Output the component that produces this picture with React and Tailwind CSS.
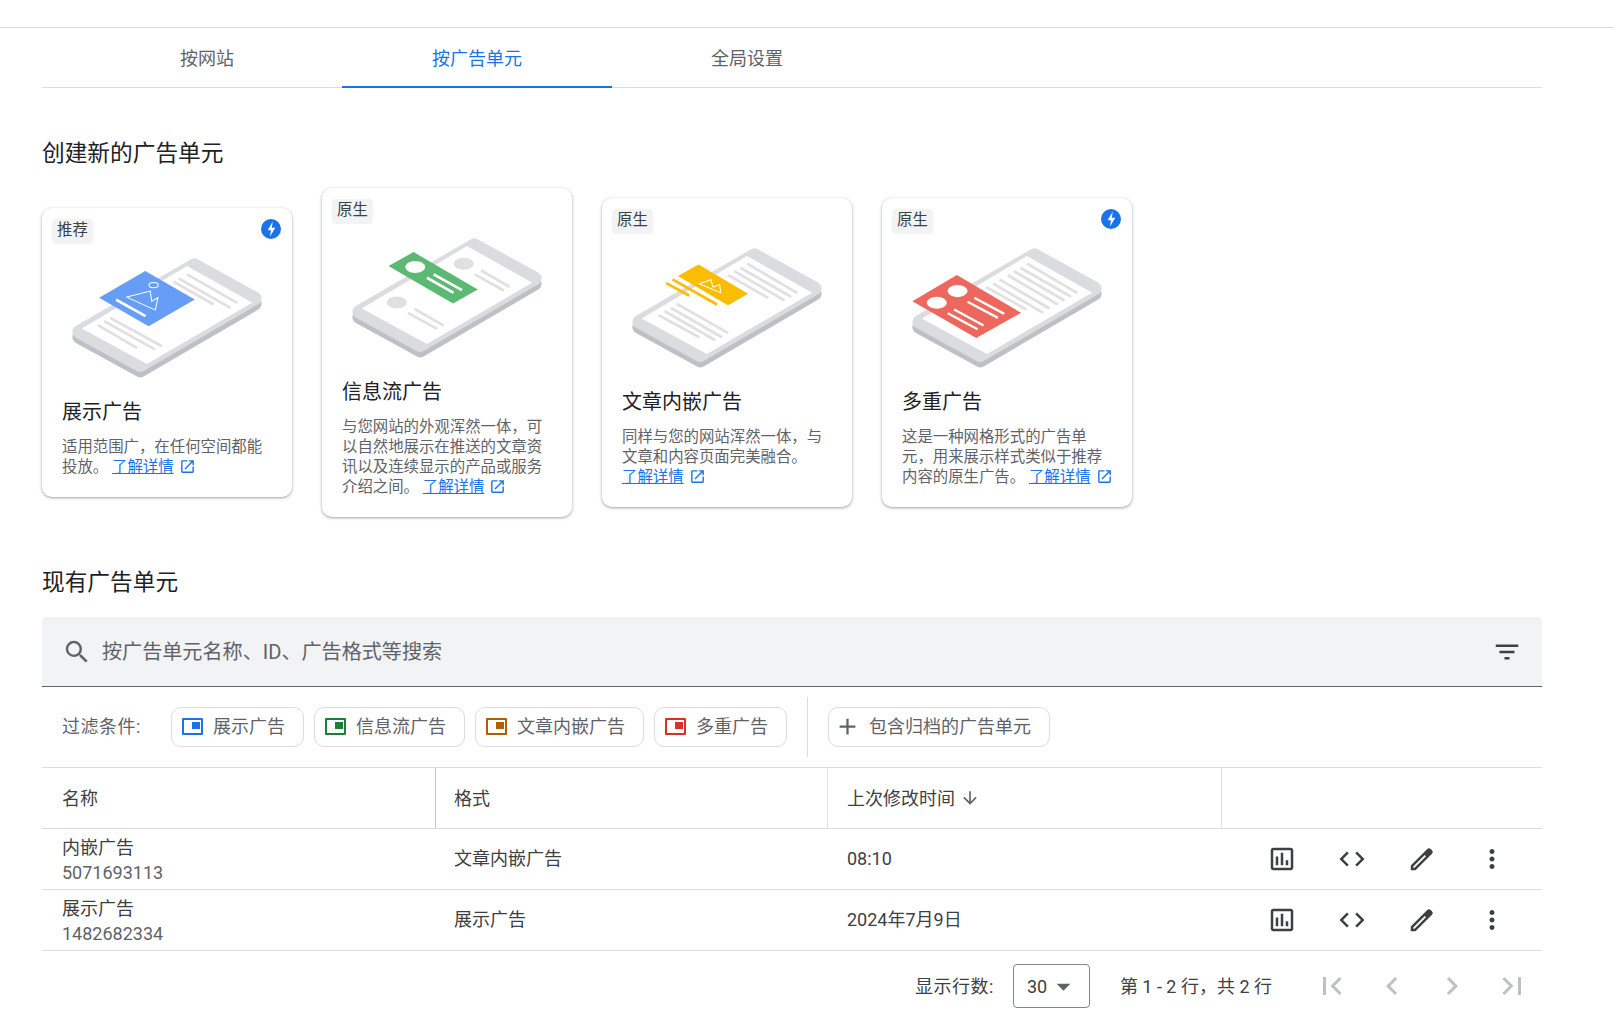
const P = {
  bolt: "M12 2a10 10 0 1 0 0 20 10 10 0 0 0 0-20zm-1 17.500 1-6.300H8.600L13.800 4.500l-1 6.300h3.500z",
  open: "M19 19H5V5h7V3H5a2 2 0 0 0-2 2v14a2 2 0 0 0 2 2h14c1.100 0 2-.9 2-2v-7h-2v7zM14 3v2h3.590l-9.830 9.830 1.410 1.410L19 6.410V10h2V3h-7z",
  search: "M15.500 14h-.79l-.28-.27A6.471 6.471 0 0 0 16 9.500 6.500 6.500 0 1 0 9.500 16c1.610 0 3.090-.59 4.230-1.570l.27.28v.79l5 4.990L20.490 19l-4.990-5zm-6 0C7.010 14 5 11.990 5 9.500S7.010 5 9.500 5 14 7.010 14 9.500 11.990 14 9.500 14z",
  filter: "M10 18h4v-2h-4v2zM3 6v2h18V6H3zm3 7h12v-2H6v2z",
  plus: "M19 13h-6v6h-2v-6H5v-2h6V5h2v6h6v2z",
  down: "M20 12l-1.410-1.410L13 16.170V4h-2v12.170l-5.580-5.590L4 12l8 8 8-8z",
  stats: "M19 3H5c-1.100 0-2 .9-2 2v14c0 1.100.9 2 2 2h14c1.100 0 2-.9 2-2V5c0-1.100-.9-2-2-2zm0 16H5V5h14v14zM7 10h2v7H7zm4-3h2v10h-2zm4 6h2v4h-2z",
  code: "M9.400 16.600L4.800 12l4.600-4.600L8 6l-6 6 6 6 1.400-1.400zm5.200 0l4.600-4.600-4.600-4.600L16 6l6 6-6 6-1.400-1.400z",
  edit: "M3 21v-3.800L16.200 4a2 2 0 0 1 2.800 0l1 1a2 2 0 0 1 0 2.800L6.800 21zM5 19h1l9.200-9.200-1-1L5 18z",
  more: "M12 8c1.100 0 2-.9 2-2s-.9-2-2-2-2 .9-2 2 .9 2 2 2zm0 2c-1.100 0-2 .9-2 2s.9 2 2 2 2-.9 2-2-.9-2-2-2zm0 6c-1.100 0-2 .9-2 2s.9 2 2 2 2-.9 2-2-.9-2-2-2z",
  first: "M18.410 16.590L13.820 12l4.590-4.590L17 6l-6 6 6 6zM6 6h2v12H6z",
  prev: "M15.410 7.410L14 6l-6 6 6 6 1.410-1.410L10.830 12z",
  next: "M10 6L8.590 7.410 13.170 12l-4.580 4.590L10 18l6-6z",
  last: "M5.590 7.410L10.180 12l-4.590 4.590L7 18l6-6-6-6zM16 6h2v12h-2z",
  caret: "M7 10l5 5 5-5z",
};

const C = "\uFF0C";

const Icon = ({ d, className }) => (
  <svg viewBox="0 0 24 24" className={className} fill="currentColor" aria-hidden="true">
    <path d={d} fillRule="evenodd" />
  </svg>
);

const Lines = ({ items, color = "#e0e0e0", w = 8 }) => (
  <g stroke={color} strokeWidth={w} fill="none">
    {items.map((l, i) => (
      <line key={i} x1={l[0]} y1={l[1]} x2={l[2]} y2={l[3]} />
    ))}
  </g>
);

const Phone = ({ children }) => (
  <svg viewBox="120 198 580 365" className="block w-[194px] h-[122px] ml-[28px] mt-[49px]" aria-hidden="true">
    <polygon points="147,438 492,238 673,338 330,538" fill="#bdc1c6" stroke="#bdc1c6" strokeWidth="40" strokeLinejoin="round" />
    <polygon points="147,422 492,222 673,322 330,522" fill="#dadce0" stroke="#dadce0" strokeWidth="40" strokeLinejoin="round" />
    <polygon points="155,412 470,225 665,335 350,518" fill="#ffffff" />
    {children}
  </svg>
);

const Display = () => (
  <Phone>
    <Lines items={[[445, 262, 600, 350], [470, 250, 620, 335], [430, 272, 550, 340], [240, 380, 395, 465], [222, 390, 375, 475], [203, 402, 320, 470]]} />
    <polygon points="345,240 493,325 355,405 207,320" fill="#669df6" />
    <ellipse cx="370" cy="282" rx="14" ry="8" fill="none" stroke="#fff" strokeWidth="3" />
    <path d="M290 318 L360 300 L364 330 L383 320 L375 357 Z" fill="none" stroke="#fff" strokeWidth="3" />
    <line x1="258" y1="326" x2="346" y2="375" stroke="#fff" strokeWidth="8" />
  </Phone>
);

const Feed = () => (
  <Phone>
    <ellipse cx="460" cy="278" rx="30" ry="18" fill="#e0e0e0" />
    <ellipse cx="260" cy="394" rx="30" ry="18" fill="#e0e0e0" />
    <Lines items={[[512, 298, 597, 347], [493, 310, 580, 358], [313, 413, 400, 463], [293, 425, 380, 473]]} />
    <polygon points="310,243 502,355 428,397 235,285" fill="#5bb974" />
    <ellipse cx="315" cy="288" rx="30" ry="18" fill="#fff" />
    <Lines color="#fff" items={[[350, 320, 430, 365], [370, 310, 455, 357]]} />
  </Phone>
);

const InArticle = () => (
  <Phone>
    <Lines items={[[470, 248, 620, 335], [450, 260, 602, 347], [432, 270, 582, 358], [413, 282, 533, 350], [260, 368, 413, 455], [242, 380, 395, 468], [223, 390, 375, 477], [205, 402, 327, 468]]} />
    <polygon points="325,250 473,338 413,372 263,285" fill="#fbbc04" />
    <Lines color="#fbbc04" items={[[247, 295, 380, 370], [228, 306, 297, 343]]} />
    <path d="M327 308 L362 296 L368 318 L388 310 L391 335 Z" fill="none" stroke="#fff" strokeWidth="3" />
  </Phone>
);

const Multi = () => (
  <Phone>
    <Lines items={[[470, 248, 620, 335], [450, 260, 602, 347], [430, 270, 582, 358], [412, 282, 562, 370], [387, 295, 537, 382], [368, 307, 518, 395], [348, 318, 468, 385]]} />
    <polygon points="260,282 452,395 318,470 127,360" fill="#ee675c" />
    <ellipse cx="262" cy="330" rx="30" ry="18" fill="#fff" />
    <ellipse cx="200" cy="365" rx="30" ry="18" fill="#fff" />
    <Lines color="#fff" w={7} items={[[312, 350, 402, 398], [292, 362, 383, 410], [252, 385, 340, 433], [233, 396, 322, 444]]} />
  </Phone>
);

const Link = () => (
  <span className="whitespace-nowrap">
    <a className="text-[#1a73e8] underline">了解详情</a>
    <Icon d={P.open} className="inline-block w-[17px] h-[17px] ml-[5px] align-[-3px] text-[#1a73e8]" />
  </span>
);

const Card = ({ tag, bolt, art, title, text, h }) => (
  <div className={`relative w-[250px] ${h} shrink-0 rounded-[10px] bg-white shadow-[0_1px_2px_rgba(60,64,67,0.3),0_1px_3px_1px_rgba(60,64,67,0.15)]`}>
    <span className="absolute left-[10px] top-[11px] h-[25px] px-[5px] rounded-[4px] bg-[#f1f3f4] text-[#3c4043] text-[15.4px] leading-[23px]">{tag}</span>
    {bolt && <Icon d={P.bolt} className="absolute right-[9px] top-[9px] w-[24px] h-[24px] text-[#1a73e8]" />}
    {art}
    <h3 className="mt-[19px] mx-[20px] text-[20px] leading-[28px] font-normal text-[#202124]">{title}</h3>
    <p className="mt-[11px] ml-[20px] mr-[18px] text-[15.4px] leading-[20px] text-[#5f6368]">
      {text}
      <Link />
    </p>
  </div>
);

const Chip = ({ color, children }) => (
  <div className="flex items-center h-10 pl-[10px] pr-[18px] pb-px rounded-[10px] border border-[#dadce0] text-[#5f6368] text-[18px]">
    <span className="relative w-[21px] h-[17px] mr-[10px] border-2 rounded-[1px]" style={{ borderColor: color }}>
      <span className="absolute left-[8px] top-[1.5px] w-[8px] h-[7px]" style={{ backgroundColor: color }} />
    </span>
    {children}
  </div>
);

const Row = ({ name, id, format, time }) => (
  <div className="grid grid-cols-[392px_393px_394px_1fr] h-[61px] border-b border-[#dadce0] items-center">
    <div className="pl-5 pt-px text-[18px] leading-[25px] text-[#3c4043]">
      <div>{name}</div>
      <div className="text-[#5f6368]">{id}</div>
    </div>
    <div className="pl-5 pb-px text-[18px] text-[#3c4043]">{format}</div>
    <div className="pl-5 pb-px text-[18px] text-[#3c4043]">{time}</div>
    <div className="flex justify-end gap-10 pr-[35px] text-[#3c4043]">
      <Icon d={P.stats} className="w-[30px] h-[30px]" />
      <Icon d={P.code} className="w-[30px] h-[30px]" />
      <Icon d={P.edit} className="w-[30px] h-[30px]" />
      <Icon d={P.more} className="w-[30px] h-[30px]" />
    </div>
  </div>
);

export default function App() {
  return (
    <div className="h-[1011px] overflow-hidden bg-white font-[Roboto,'Noto_Sans_CJK_SC',sans-serif]">
      <div className="h-[28px] border-b border-[#dadce0]" />
      <div className="ml-[42px] w-[1500px]">
        <div className="flex h-[60px] pl-[30px] border-b border-[#dadce0] text-[18px] text-[#5f6368]">
          <div className="w-[270px] flex items-center justify-center pt-[2px]">按网站</div>
          <div className="w-[270px] flex items-center justify-center pt-[2px] text-[#1a73e8] border-b-2 border-[#1a73e8] h-[60px]">按广告单元</div>
          <div className="w-[270px] flex items-center justify-center pt-[2px]">全局设置</div>
        </div>

        <h2 className="mt-[50px] text-[22.7px] leading-[32px] font-normal text-[#202124]">创建新的广告单元</h2>
        <div className="mt-[17px] h-[330px] flex items-center gap-[30px]">
          <Card h="h-[289px]" tag="推荐" bolt art={<Display />} title="展示广告" text={`适用范围广${C}在任何空间都能投放。 `} />
          <Card h="h-[329px]" tag="原生" art={<Feed />} title="信息流广告" text={`与您网站的外观浑然一体${C}可以自然地展示在推送的文章资讯以及连续显示的产品或服务介绍之间。 `} />
          <Card h="h-[309px]" tag="原生" art={<InArticle />} title="文章内嵌广告" text={`同样与您的网站浑然一体${C}与文章和内容页面完美融合。`} />
          <Card h="h-[309px]" tag="原生" bolt art={<Multi />} title="多重广告" text={`这是一种网格形式的广告单元${C}用来展示样式类似于推荐内容的原生广告。 `} />
        </div>

        <h2 className="mt-[50px] text-[22.7px] leading-[32px] font-normal text-[#202124]">现有广告单元</h2>
        <div className="mt-[18px] h-[70px] flex items-center pl-[20px] pr-[20px] bg-[#f1f3f4] rounded-t-[4px] border-b border-[#5f6368]">
          <Icon d={P.search} className="w-[30px] h-[30px] text-[#5f6368]" />
          <span className="ml-[10px] pt-px flex-1 text-[20.1px] text-[#5f6368]">按广告单元名称、ID、广告格式等搜索</span>
          <Icon d={P.filter} className="w-[30px] h-[30px] text-[#3c4043]" />
        </div>

        <div className="h-[81px] flex items-center pl-5 border-b border-[#dadce0]">
          <span className="w-[109px] pb-px text-[18px] tracking-[0.5px] text-[#5f6368]">过滤条件:</span>
          <div className="flex items-center gap-[10px]">
            <Chip color="#1a73e8">展示广告</Chip>
            <Chip color="#188038">信息流广告</Chip>
            <Chip color="#b06000">文章内嵌广告</Chip>
            <Chip color="#d93025">多重广告</Chip>
          </div>
          <div className="w-px h-[60px] mx-[20px] bg-[#dadce0]" />
          <div className="flex items-center h-10 pl-[5px] pr-[18px] pb-px rounded-[10px] border border-[#dadce0] text-[#5f6368] text-[18px]">
            <Icon d={P.plus} className="w-[27px] h-[27px] mr-[8px]" />
            包含归档的广告单元
          </div>
        </div>

        <div className="grid grid-cols-[394px_392px_394px_1fr] h-[61px] border-b border-[#dadce0] text-[18px] text-[#3c4043]">
          <div className="flex items-center pl-5 border-r border-[#a8c7fa]">名称</div>
          <div className="flex items-center pl-[18px] border-r border-[#d2e3fc]">格式</div>
          <div className="flex items-center pl-[19px] border-r border-[#d2e3fc]">
            上次修改时间
            <Icon d={P.down} className="w-[20px] h-[20px] ml-[5px] text-[#5f6368]" />
          </div>
          <div />
        </div>
        <Row name="内嵌广告" id="5071693113" format="文章内嵌广告" time="08:10" />
        <Row name="展示广告" id="1482682334" format="展示广告" time="2024年7月9日" />

        <div className="mt-[13px] h-[44px] flex items-center justify-end pr-3 text-[18px] text-[#3c4043]">
          <span className="tracking-[0.5px]">显示行数:</span>
          <div className="ml-[19px] w-[77px] h-[44px] flex items-center pl-[13px] border border-[#80868b] rounded-[4px]">
            30
            <Icon d={P.caret} className="w-[33px] h-[33px] text-[#5f6368]" />
          </div>
          <span className="ml-[30px]">{`第 1 - 2 行${C}共 2 行`}</span>
          <div className="ml-[42px] flex gap-6 text-[#bdc1c6]">
            <Icon d={P.first} className="w-9 h-9" />
            <Icon d={P.prev} className="w-9 h-9" />
            <Icon d={P.next} className="w-9 h-9" />
            <Icon d={P.last} className="w-9 h-9" />
          </div>
        </div>
      </div>
    </div>
  );
}
